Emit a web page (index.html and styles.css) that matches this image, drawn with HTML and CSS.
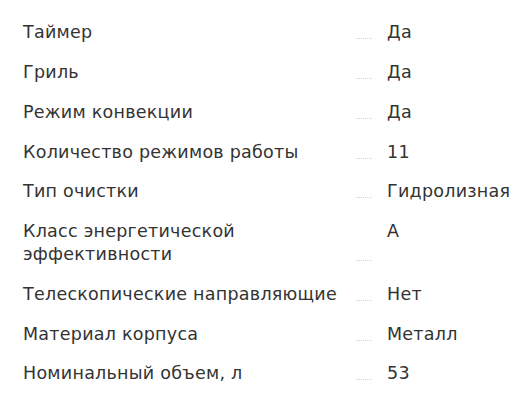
FILE: index.html
```html
<!DOCTYPE html>
<html lang="ru">
<head>
<meta charset="utf-8">
<link rel="stylesheet" href="styles.css">
</head>
<body>
<dl class="specs">
  <div class="row"><dt class="label">Таймер</dt><span class="leader"></span><dd class="value">Да</dd></div>
  <div class="row"><dt class="label">Гриль</dt><span class="leader"></span><dd class="value">Да</dd></div>
  <div class="row"><dt class="label">Режим конвекции</dt><span class="leader"></span><dd class="value">Да</dd></div>
  <div class="row"><dt class="label">Количество режимов работы</dt><span class="leader"></span><dd class="value">11</dd></div>
  <div class="row"><dt class="label">Тип очистки</dt><span class="leader"></span><dd class="value">Гидролизная</dd></div>
  <div class="row"><dt class="label">Класс энергетической<br>эффективности</dt><span class="leader"></span><dd class="value">A</dd></div>
  <div class="row"><dt class="label">Телескопические направляющие</dt><span class="leader"></span><dd class="value">Нет</dd></div>
  <div class="row"><dt class="label">Материал корпуса</dt><span class="leader"></span><dd class="value">Металл</dd></div>
  <div class="row"><dt class="label">Номинальный объем, л</dt><span class="leader"></span><dd class="value">53</dd></div>
</dl>
</body>
</html>
```
FILE: styles.css
```css
html, body {
  margin: 0;
  padding: 0;
  background: #ffffff;
}
body {
  font-family: "DejaVu Sans", "Noto Sans", sans-serif;
  font-size: 17.5px;
  line-height: 23px;
  letter-spacing: 0.25px;
  color: #333333;
}
.specs {
  margin: 0;
  padding: 21.45px 0 0 23px;
  display: flex;
  flex-direction: column;
}
.row {
  display: grid;
  grid-template-columns: 333px 16px auto;
  align-items: end;
  padding: 0 0 16.75px;
}
.label, .value {
  margin: 0;
  white-space: nowrap;
}
.value {
  align-self: start;
  margin-left: 15px;
}
.leader {
  height: 6px;
  margin-bottom: 5px;
  border-bottom: 1px dotted #d4d4d4;
}
```
